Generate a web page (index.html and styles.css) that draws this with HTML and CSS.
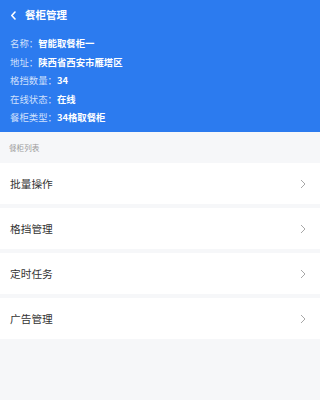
FILE: index.html
```html
<!DOCTYPE html>
<html lang="zh">
<head>
<meta charset="utf-8">
<meta name="viewport" content="width=device-width, initial-scale=1">
<link rel="stylesheet" href="styles.css">
</head>
<body>
<div class="page">
  <header class="header">
    <div class="nav">
      <svg class="back" width="7" height="9" viewBox="0 0 7 9"><path d="M5 1 L1.8 4.5 L5 8" fill="none" stroke="#fff" stroke-width="1.6" stroke-linecap="round" stroke-linejoin="round"/></svg>
      <span class="title">餐柜管理</span>
    </div>
    <div class="info">
      <div class="line"><span class="label">名称：</span><span class="value">智能取餐柜一</span></div>
      <div class="line"><span class="label">地址：</span><span class="value">陕西省西安市雁塔区</span></div>
      <div class="line"><span class="label">格挡数量：</span><span class="value">34</span></div>
      <div class="line"><span class="label">在线状态：</span><span class="value">在线</span></div>
      <div class="line"><span class="label">餐柜类型：</span><span class="value">34格取餐柜</span></div>
    </div>
  </header>
  <div class="section">餐柜列表</div>
  <ul class="list">
    <li class="item"><span>批量操作</span><svg class="arrow" width="6" height="10" viewBox="0 0 6 10"><path d="M1 1 L5 5 L1 9" fill="none" stroke="#a8a8a8" stroke-width="1"/></svg></li>
    <li class="item"><span>格挡管理</span><svg class="arrow" width="6" height="10" viewBox="0 0 6 10"><path d="M1 1 L5 5 L1 9" fill="none" stroke="#a8a8a8" stroke-width="1"/></svg></li>
    <li class="item"><span>定时任务</span><svg class="arrow" width="6" height="10" viewBox="0 0 6 10"><path d="M1 1 L5 5 L1 9" fill="none" stroke="#a8a8a8" stroke-width="1"/></svg></li>
    <li class="item"><span>广告管理</span><svg class="arrow" width="6" height="10" viewBox="0 0 6 10"><path d="M1 1 L5 5 L1 9" fill="none" stroke="#a8a8a8" stroke-width="1"/></svg></li>
  </ul>
</div>
</body>
</html>
```
FILE: styles.css
```css
html, body {
  margin: 0;
  padding: 0;
  background: #f6f7f9;
  font-family: "Noto Sans CJK SC", "Noto Sans", sans-serif;
}
.page {
  width: 100%;
  min-height: 400px;
  background: #f6f7f9;
}
.header {
  background: #2c7bef;
  color: #fff;
  padding: 0 0 5px 0;
  height: 127px;
}
.nav {
  height: 30px;
  display: flex;
  align-items: center;
  padding-left: 10px;
}
.back {
  display: block;
  margin-right: 8px;
}
.title {
  font-size: 10.5px;
  font-weight: bold;
  line-height: 1;
}
.info {
  padding: 4px 0 0 10px;
}
.line {
  height: 18.6px;
  line-height: 18.6px;
  font-size: 9.4px;
  white-space: nowrap;
}
.label {
  color: rgba(255,255,255,0.78);
}
.value {
  font-weight: bold;
  color: #fff;
}
.section {
  height: 31px;
  line-height: 31px;
  padding-left: 9px;
  font-size: 7.6px;
  color: #9a9a9a;
}
.list {
  list-style: none;
  margin: 0;
  padding: 0;
  display: flex;
  flex-direction: column;
  gap: 4px;
}
.item {
  height: 41px;
  background: #fff;
  display: flex;
  align-items: center;
  justify-content: space-between;
  padding: 0 14px 0 10px;
  font-size: 10.7px;
  color: #333;
}
.arrow {
  display: block;
}
```
